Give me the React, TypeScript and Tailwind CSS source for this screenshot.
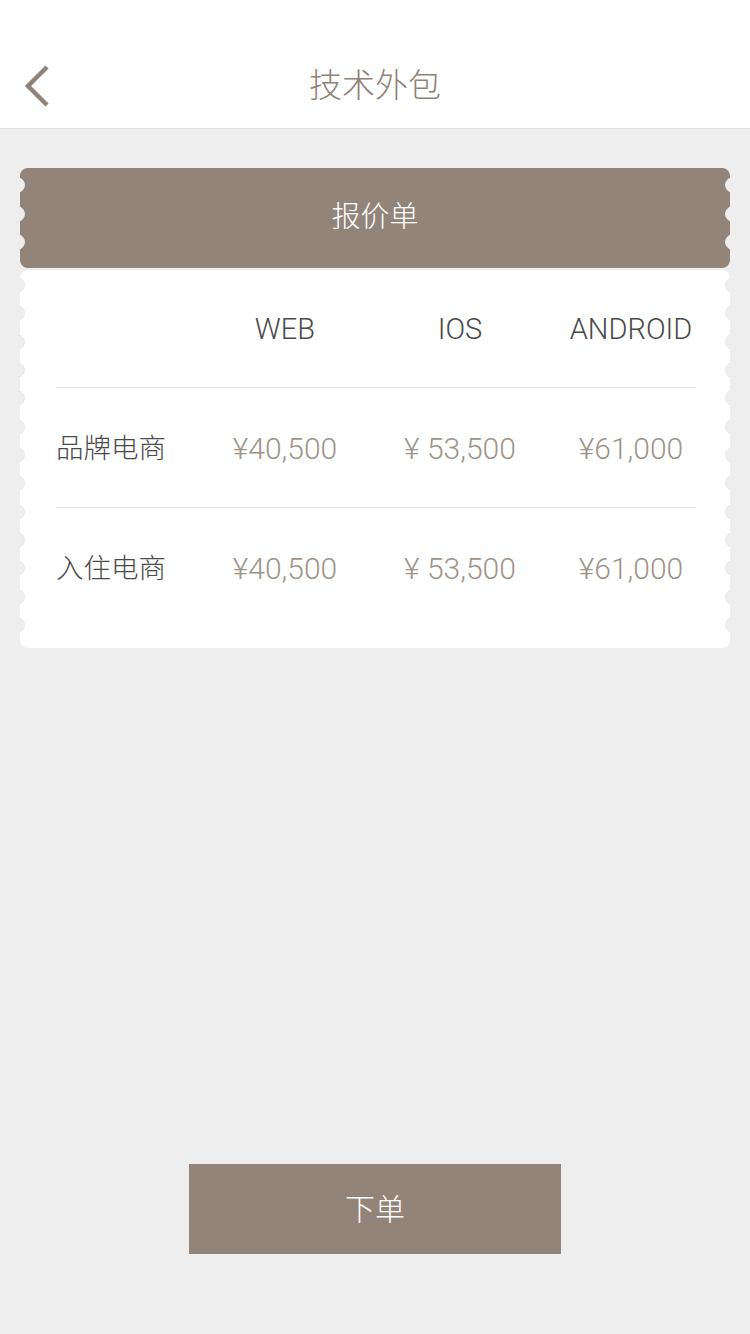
import React from "react";

const BROWN = "bg-[#928479]";

const rows = [
  { name: "品牌电商", prices: ["¥40,500", "¥ 53,500", "¥61,000"] },
  { name: "入住电商", prices: ["¥40,500", "¥ 53,500", "¥61,000"] },
];

// 票券边缘的半圆缺口
const Notches = ({ tops }: { tops: number[] }) => (
  <>
    {tops.map((t, i) => (
      <React.Fragment key={i}>
        <span
          className="absolute left-[-11px] w-[16px] h-[16px] rounded-full bg-[#eeeeee] border border-[#e8e8e8]"
          style={{ top: t - 8 }}
        />
        <span
          className="absolute right-[-11px] w-[16px] h-[16px] rounded-full bg-[#eeeeee] border border-[#e8e8e8]"
          style={{ top: t - 8 }}
        />
      </React.Fragment>
    ))}
  </>
);

const headerTops = [17, 45.5, 74];
const bodyTops = Array.from({ length: 13 }, (_, i) => 15 + i * 28.33);

export default function App() {
  return (
    <div
      className="w-[750px] h-[1334px] bg-[#eeeeee] flex flex-col"
      style={{ fontFamily: "Roboto, 'Noto Sans CJK SC', sans-serif" }}
    >
      {/* 顶部导航 */}
      <div className="h-[129px] bg-white border-b border-[#e2ded6] flex items-end pb-[22px] relative">
        <svg
          className="absolute left-[22px] top-[63px]"
          width="30"
          height="46"
          viewBox="0 0 30 46"
          fill="none"
        >
          <path d="M25 4 L6 23 L25 42" stroke="#8f8278" strokeWidth="4.5" />
        </svg>
        <div className="w-full text-center text-[33px] leading-[40px] font-light text-[#8f8278]">
          技术外包
        </div>
      </div>

      <div className="px-[20px] pt-[39px]">
        {/* 报价单 头部 */}
        <div className={`relative overflow-hidden h-[100px] rounded-[8px] ${BROWN} flex items-center justify-center`}>
          <span className="text-[29px] font-light text-white">报价单</span>
          <Notches tops={headerTops} />
        </div>

        {/* 报价表 */}
        <div className="relative overflow-hidden mt-[2px] h-[378px] rounded-[8px] bg-white px-[36px]">
          <Notches tops={bodyTops} />
          <div className="grid grid-cols-[144px_170px_180px_162px] h-[117px] items-center text-[29px] font-light text-[#4a4a4a] pt-[2px]">
            <span />
            <span className="text-center">WEB</span>
            <span className="text-center">IOS</span>
            <span className="text-center">ANDROID</span>
          </div>
          {rows.map((r) => (
            <div key={r.name}>
              <div className="h-px w-[640px] bg-[#e6e6e6]" />
              <div className="grid grid-cols-[144px_170px_180px_162px] h-[119px] items-center pt-[2px]">
                <span className="text-[27.5px] font-light text-[#4a4a4a]">{r.name}</span>
                {r.prices.map((p, i) => (
                  <span key={i} className="text-center text-[30px] font-light text-[#a09489]">
                    {p}
                  </span>
                ))}
              </div>
            </div>
          ))}
        </div>
      </div>

      <div className="flex-1" />

      {/* 下单按钮 */}
      <div className="flex justify-center pb-[80px]">
        <button className={`w-[372px] h-[90px] ${BROWN} text-white text-[30px] font-light`}>
          下单
        </button>
      </div>
    </div>
  );
}
